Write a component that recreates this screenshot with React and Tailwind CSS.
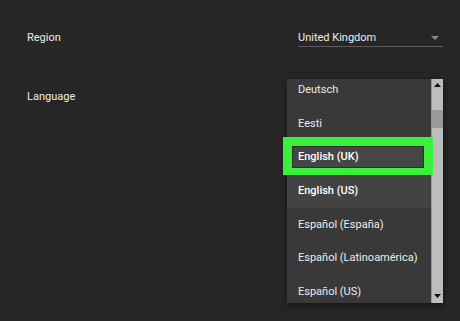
import React from "react";

export default function App() {
  const item = "flex items-center pl-[11px] text-[11px]";
  return (
    <div
      className="relative w-[460px] h-[321px] bg-[#262626] text-[#ececec] overflow-hidden"
      style={{ fontFamily: "Roboto, 'Liberation Sans', sans-serif" }}
    >
      <div className="pl-[27px]">
        <div className="h-[67px] flex items-start pt-[30px] border-b border-[#2b2b2b]">
          <div className="w-[271px] text-[11px] leading-[16px]">Region</div>
          <div className="w-[145px] h-[17px] flex items-start justify-between border-b border-[#5a5a5a]">
            <span className="text-[11px] leading-[15px]">United Kingdom</span>
            <svg width="8" height="5" viewBox="0 0 8 5" className="mt-[6px] mr-[4px]">
              <path d="M0 0 L8 0 L4 4 Z" fill="#8a8a8a" />
            </svg>
          </div>
        </div>
        <div className="h-[56px] pt-[22px] border-b border-[#2b2b2b]">
          <div className="text-[11px] leading-[16px]">Language</div>
        </div>
      </div>

      <div className="absolute left-[287px] top-[79px] w-[156px] h-[224px] flex shadow-[0_2px_6px_rgba(0,0,0,0.5)]">
        <div className="flex-1 bg-[#393939] flex flex-col">
          <div className={`h-[28px] pb-[6px] ${item}`}>Deutsch</div>
          <div className={`h-[33.67px] ${item}`}>Eesti</div>
          <div className="relative h-[33.67px] z-10">
            <div className="absolute left-[-4px] right-[-2px] top-[-3.67px] h-[38px] bg-[#3af03a] pt-[9px] pr-[9px] pb-[7px] pl-[9px]">
              <div className="w-full h-full bg-[#464646] border border-[#2e2e2e] flex items-center pl-[5px] text-[11px] font-medium text-white">
                English (UK)
              </div>
            </div>
          </div>
          <div className={`h-[33.67px] bg-[#434343] font-medium text-white ${item}`}>English (US)</div>
          <div className={`h-[33.67px] ${item}`}>Español (España)</div>
          <div className={`h-[33.67px] ${item}`}>Español (Latinoamérica)</div>
          <div className={`flex-1 pt-[6px] ${item}`}>Español (US)</div>
        </div>
        <div className="w-[12px] bg-[#bdbdbd] flex flex-col items-center border-l border-[#9a9a9a]">
          <svg width="7" height="5" viewBox="0 0 7 5" className="mt-[4px] shrink-0">
            <path d="M0 4 L7 4 L3.5 0 Z" fill="#111" />
          </svg>
          <div className="w-full h-[18px] bg-[#9a9a9a] mt-[22px] shrink-0" />
          <div className="flex-1" />
          <svg width="7" height="5" viewBox="0 0 7 5" className="mb-[4px] shrink-0">
            <path d="M0 0 L7 0 L3.5 4 Z" fill="#111" />
          </svg>
        </div>
      </div>
    </div>
  );
}
